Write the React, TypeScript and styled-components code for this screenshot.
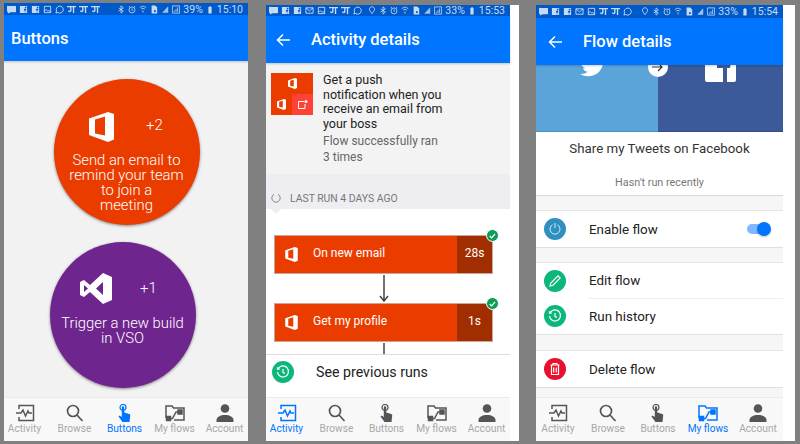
import React from 'react';
import styled, { createGlobalStyle } from 'styled-components';

const Global = createGlobalStyle`
  html, body { margin: 0; padding: 0; background: #808080; }
  body { font-family: Roboto, "Liberation Sans", sans-serif; }
`;

const Page = styled.div`
  width: 800px;
  height: 444px;
  display: flex;
  align-items: flex-start;
  overflow: hidden;
  background: #808080;
`;

const Phone = styled.section<{ $left: number; $top: number; $width: number; $strip?: number }>`
  margin-left: ${p => p.$left}px;
  margin-top: ${p => p.$top}px;
  width: ${p => p.$width}px;
  height: ${p => 441 - p.$top}px;
  padding-right: ${p => p.$strip || 0}px;
  background: #fff;
  display: flex;
  flex-direction: column;
  flex: none;
  overflow: hidden;
`;

const StatusBar = styled.div<{ $h: number }>`
  height: ${p => p.$h}px;
  flex: none;
  background: #0059c9;
  color: rgba(255, 255, 255, 0.78);
  font-size: 10.5px;
  display: flex;
  align-items: center;
  justify-content: space-between;
  padding: 0 5px 0 3px;
`;

const StatusGroup = styled.div`
  display: flex;
  align-items: center;
  gap: 3px;
`;

const AppBar = styled.header<{ $h?: number; $pad?: number }>`
  height: ${p => p.$h || 47}px;
  flex: none;
  background: #0075ff;
  color: #fff;
  display: flex;
  align-items: center;
  font-size: 16.5px;
  font-weight: 500;
  padding-left: ${p => p.$pad || 7}px;
  gap: 21px;
  box-shadow: 0 1px 2px rgba(0, 0, 0, 0.2);
  position: relative;
  z-index: 2;
`;

const Body = styled.main<{ $bg?: string }>`
  flex: 1;
  min-height: 0;
  overflow: hidden;
  background: ${p => p.$bg || '#fff'};
  display: flex;
  flex-direction: column;
`;

const TabBar = styled.nav`
  height: 44px;
  flex: none;
  background: #f8f8f8;
  border-top: 1px solid #ebebeb;
  display: grid;
  grid-template-columns: repeat(5, 50px);
  justify-content: center;
  padding-right: 3px;
  box-sizing: border-box;
`;

const Tab = styled.div<{ $active?: boolean }>`
  display: flex;
  flex-direction: column;
  align-items: center;
  padding-top: 6px;
  gap: 1px;
  font-size: 10.2px;
  line-height: 12px;
  white-space: nowrap;
  color: ${p => (p.$active ? '#0075ff' : '#a8a8a8')};
  svg { color: ${p => (p.$active ? '#0075ff' : '#555')}; }
`;

/* buttons screen */
const CircleList = styled.div`
  display: flex;
  flex-direction: column;
  align-items: center;
  padding: 18px 3px 0 0;
  gap: 17px;
`;

const Circle = styled.div<{ $bg: string; $shift: number; $pad: number }>`
  width: 146px;
  height: 146px;
  border-radius: 50%;
  flex: none;
  background: ${p => p.$bg};
  color: #fff;
  box-shadow: 0 1px 3px rgba(0, 0, 0, 0.45);
  transform: translateX(${p => p.$shift}px);
  display: flex;
  flex-direction: column;
  align-items: center;
  padding-top: ${p => p.$pad}px;
  box-sizing: border-box;
`;

const CircleTop = styled.div<{ $gap: number; $indent: number }>`
  height: 32px;
  display: flex;
  align-items: center;
  gap: ${p => p.$gap}px;
  margin-left: ${p => p.$indent}px;
  font-size: 15px;
  font-weight: 300;
`;

const CircleCount = styled.span<{ $lift: number }>`
  margin-bottom: ${p => p.$lift}px;
`;

const CircleText = styled.div<{ $gap: number }>`
  margin-top: ${p => p.$gap}px;
  width: 130px;
  text-align: center;
  font-size: 14.8px;
  font-weight: 300;
  line-height: 15px;
`;

/* activity screen */
const Summary = styled.div`
  background: #f3f3f3;
  height: 111px;
  flex: none;
  box-sizing: border-box;
  padding: 10px 0 0 5px;
  display: flex;
  gap: 10px;
`;

const Tile = styled.div`
  width: 42px;
  height: 42px;
  flex: none;
  background: #eb3c00;
  display: grid;
  grid-template-columns: 1fr 1fr;
  grid-template-rows: 1fr 1fr;
  place-items: center;
  svg { color: #fff; }
`;

const TileTop = styled.div`
  grid-column: 1 / -1;
  display: flex;
`;

const TileAccent = styled.div`
  width: 100%;
  height: 100%;
  background: #ff4136;
  display: flex;
  align-items: center;
  justify-content: center;
`;

const SummaryTitle = styled.div`
  width: 125px;
  font-size: 12.5px;
  line-height: 14.6px;
  color: #222;
`;

const SummaryNote = styled.div`
  margin-top: 2px;
  font-size: 12px;
  line-height: 16px;
  color: #666;
  width: 120px;
`;

const LastRun = styled.div`
  height: 35px;
  flex: none;
  box-sizing: border-box;
  background: #eeeef2;
  display: flex;
  align-items: center;
  padding: 13px 0 0 5px;
  gap: 9px;
  font-size: 10.4px;
  color: #777;
  position: relative;
  &::after {
    content: '';
    position: absolute;
    left: 5px;
    bottom: -5px;
    border-left: 5px solid transparent;
    border-right: 5px solid transparent;
    border-top: 5px solid #eeeef2;
  }
`;

const Flow = styled.div`
  flex: 1;
  min-height: 0;
  overflow: hidden;
  padding: 26px 0 0 8px;
  display: flex;
  flex-direction: column;
  align-items: flex-start;
`;

const Step = styled.div`
  width: 219px;
  height: 39px;
  flex: none;
  box-sizing: border-box;
  background: #eb3c00;
  border: 1px solid #c9a89c;
  color: #fff;
  display: flex;
  align-items: center;
  font-size: 12px;
  position: relative;
  padding-left: 10px;
  gap: 15px;
`;

const StepName = styled.span`
  flex: 1;
  margin-bottom: 3px;
`;

const StepTime = styled.span`
  width: 35px;
  height: 100%;
  box-sizing: border-box;
  padding-bottom: 4px;
  background: #a12e00;
  display: flex;
  align-items: center;
  justify-content: center;
`;

const Check = styled.span`
  position: absolute;
  right: -7px;
  top: -7px;
  width: 11px;
  height: 11px;
  border-radius: 50%;
  background: #0f9d58;
  border: 1px solid #fff;
  display: flex;
  align-items: center;
  justify-content: center;
`;

const Connector = styled.svg`
  display: block;
  margin-left: 105px;
  flex: none;
`;

const SeeRuns = styled.div`
  height: 43px;
  flex: none;
  box-sizing: border-box;
  background: #fff;
  border-top: 1px solid #ddd;
  display: flex;
  align-items: center;
  padding: 0 0 8px 6px;
  gap: 22px;
  font-size: 14.2px;
  color: #222;
`;

const RoundIcon = styled.span<{ $bg: string }>`
  width: 22px;
  height: 22px;
  border-radius: 50%;
  flex: none;
  background: ${p => p.$bg};
  color: #fff;
  display: flex;
  align-items: center;
  justify-content: center;
`;

/* flow details screen */
const Hero = styled.div`
  height: 67px;
  flex: none;
  display: grid;
  grid-template-columns: 122px 1fr;
  grid-template-rows: 67px;
  overflow: hidden;
  position: relative;
`;

const HeroSide = styled.div<{ $bg: string; $bottom: number; $back: number }>`
  box-sizing: border-box;
  background: ${p => p.$bg};
  border-bottom: 1px solid rgba(0, 0, 0, 0.12);
  display: flex;
  justify-content: center;
  align-items: flex-end;
  padding-bottom: ${p => p.$bottom}px;
  padding-right: ${p => p.$back}px;
  color: #fff;
`;

const HeroArrow = styled.span`
  position: absolute;
  left: 112px;
  top: -8px;
  width: 20px;
  height: 20px;
  border-radius: 50%;
  background: #fff;
  display: flex;
  align-items: center;
  justify-content: center;
`;

const FlowName = styled.div`
  height: 64px;
  flex: none;
  box-sizing: border-box;
  background: #fff;
  border-bottom: 1px solid #d9d9d9;
  display: flex;
  flex-direction: column;
  align-items: center;
`;

const FlowTitle = styled.div`
  margin-top: 8px;
  font-size: 13.3px;
  line-height: 17px;
  color: #333;
`;

const FlowStatus = styled.div`
  margin-top: 19px;
  font-size: 10.8px;
  line-height: 13px;
  color: #777;
`;

const Band = styled.div<{ $h: number }>`
  height: ${p => p.$h}px;
  flex: none;
  background: #f6f6f6;
`;

const Group = styled.div`
  flex: none;
  background: #fff;
  border-top: 1px solid #e6e6e6;
  border-bottom: 1px solid #e0e0e0;
`;

const Row = styled.div`
  height: 35.5px;
  display: flex;
  align-items: center;
  padding: 0 8px;
  gap: 23px;
  font-size: 13.4px;
  color: #222;
`;

const RowLabel = styled.span<{ $rule?: boolean }>`
  flex: 1;
  align-self: stretch;
  display: flex;
  align-items: center;
  padding-top: 1px;
  margin-right: -8px;
  border-bottom: ${p => (p.$rule ? '1px solid #eee' : 'none')};
`;

const Toggle = styled.span`
  width: 21px;
  height: 10px;
  border-radius: 5px;
  background: #80b8ff;
  position: relative;
  margin-right: 7px;
  &::after {
    content: '';
    position: absolute;
    right: -3px;
    top: -2px;
    width: 14px;
    height: 14px;
    border-radius: 50%;
    background: #0075ff;
    box-shadow: 0 1px 2px rgba(0, 0, 0, 0.25);
  }
`;

/* drawings */
const Office = ({ w = 25, h = 30 }: { w?: number; h?: number }) => (
  <svg width={w} height={h} viewBox="0 0 25 30">
    <path fill="currentColor" fillRule="evenodd" d="M0 6.500 19 0l6 2v25.500L19 30 0 23V6.500Zm6 1L16 4.500V23.500L6 21.500V7.500Z" />
  </svg>
);

const VisualStudio = () => (
  <svg width="32" height="31" viewBox="0 0 32 31">
    <path fill="currentColor" fillRule="evenodd" d="M23 0l9 4v23l-9 4-13-12-6 5-4-2V9l4-2 6 5L23 0Zm0 9-7 6.5 7 6.5V9ZM4 12v7l4-3.5L4 12Z" />
  </svg>
);

const Back = () => (
  <svg width="14" height="14" viewBox="0 0 14 14" fill="none" stroke="#fff" strokeWidth="1.5">
    <path d="M14 7H1.500M7 1.500 1.500 7 7 12.500" />
  </svg>
);

const History = () => (
  <svg width="14" height="14" viewBox="0 0 14 14" fill="none" stroke="#fff" strokeWidth="1.2">
    <path d="M2.400 3.400A5.500 5.500 0 1 1 1.500 7M1.500 2.200v2h2.200M7 4v3.400l2 1.200" />
  </svg>
);

const Pencil = () => (
  <svg width="14" height="14" viewBox="0 0 14 14" fill="none" stroke="#fff" strokeWidth="1.1">
    <path d="M2 12l.8-3L10 1.800l2.200 2.200L5 11.200 2 12Z" />
  </svg>
);

const Trash = () => (
  <svg width="14" height="14" viewBox="0 0 14 14" fill="none" stroke="#fff" strokeWidth="1.2">
    <path d="M2.500 3h9M5 3V1.500h4V3M3.500 3v9.500h7V3M5.700 5.500v5M8.300 5.500v5" />
  </svg>
);

const Power = () => (
  <svg width="14" height="14" viewBox="0 0 14 14" fill="none" stroke="#d5ecf7" strokeWidth="1">
    <path d="M4.500 2.800a5 5 0 1 0 5 0M7 1v5" />
  </svg>
);

const Twitter = () => (
  <svg width="26" height="22" viewBox="0 0 24 20">
    <path fill="currentColor" d="M24 2.400a10 10 0 0 1-2.800.8A5 5 0 0 0 23.300.500a10 10 0 0 1-3.100 1.200 4.900 4.900 0 0 0-8.400 4.500A14 14 0 0 1 1.700.900a4.900 4.900 0 0 0 1.500 6.600 5 5 0 0 1-2.200-.6c0 2.400 1.700 4.400 3.900 4.900a5 5 0 0 1-2.200.1 4.900 4.900 0 0 0 4.600 3.400A10 10 0 0 1 0 17.300 14 14 0 0 0 7.500 19.500c9.100 0 14.300-7.700 14-14.600A10 10 0 0 0 24 2.400Z" />
  </svg>
);

const Facebook = () => (
  <svg width="31" height="31" viewBox="0 0 31 31">
    <path fill="currentColor" fillRule="evenodd" d="M2 0h27a2 2 0 0 1 2 2v27a2 2 0 0 1-2 2H2a2 2 0 0 1-2-2V2a2 2 0 0 1 2-2Zm16 31V17h-6v-3h6v-4c0-3 2-5 5-5h3v3h-2c-1.500 0-2 .5-2 2v4h3.500l-.5 3H22v14h-4Z" />
  </svg>
);

const ActivityIcon = () => (
  <svg width="20" height="18" viewBox="0 0 20 18" fill="none" stroke="currentColor" strokeWidth="1.5">
    <path d="M4 5V1.500h14.500v15H4V13M1 9h5l2-3 2.500 6 2.500-5 1 2h3" />
  </svg>
);

const BrowseIcon = () => (
  <svg width="20" height="18" viewBox="0 0 20 18" fill="none" stroke="currentColor" strokeWidth="1.700">
    <circle cx="8" cy="7" r="5.500" />
    <path d="M12 11l5.500 6" />
  </svg>
);

const ButtonsIcon = () => (
  <svg width="20" height="18" viewBox="0 0 20 18" fill="none">
    <circle cx="8" cy="3.500" r="3" stroke="currentColor" strokeWidth="1.200" />
    <path fill="currentColor" d="M6.800 3.500a1.200 1.200 0 0 1 2.400 0v5l5 1.500c.8.300 1.200 1 1 1.800L14.500 18H7.500L3.500 12.500l1-1 2.300 1.500V3.500Z" />
  </svg>
);

const FlowsIcon = () => (
  <svg width="20" height="18" viewBox="0 0 20 18" fill="none" stroke="currentColor" strokeWidth="1.500">
    <path d="M1 14V2h6l1.500 2H19v12H9" />
    <path d="M5 14.500h2.500L11 8h3" />
    <rect x="1.500" y="12.500" width="4" height="4" fill="currentColor" />
    <rect x="13" y="6" width="4" height="4" fill="currentColor" />
  </svg>
);

const AccountIcon = () => (
  <svg width="20" height="18" viewBox="0 0 20 18">
    <circle cx="10" cy="4.500" r="4.300" fill="currentColor" />
    <path fill="currentColor" d="M1.500 18v-2c0-3 4-5 8.500-5s8.500 2 8.500 5v2h-17Z" />
  </svg>
);

const tabs = [
  { name: 'Activity', icon: <ActivityIcon /> },
  { name: 'Browse', icon: <BrowseIcon /> },
  { name: 'Buttons', icon: <ButtonsIcon /> },
  { name: 'My flows', icon: <FlowsIcon /> },
  { name: 'Account', icon: <AccountIcon /> },
];

const Tabs = ({ active }: { active: string }) => (
  <TabBar>
    {tabs.map(t => (
      <Tab key={t.name} $active={t.name === active}>
        {t.icon}
        <span>{t.name}</span>
      </Tab>
    ))}
  </TabBar>
);

const glyphs: Record<string, React.ReactNode> = {
  msg: <path fill="currentColor" d="M2 1h7a2 2 0 0 1 0 7H4L1 9.500V7.500A3 3 0 0 1 2 1Z" />,
  fb: <path fill="currentColor" d="M1 1h8v8H7V6h1V4.500H7V3.500h1.200V2H6.500v2.500h-1V6h1v3H1V1Z" />,
  mail: <path fill="none" stroke="currentColor" d="M1 2h8v6H1V2Zm0 0 4 3.500L9 2" />,
  img: <path fill="none" stroke="currentColor" d="M1.500 1.500h7v7h-7v-7ZM1.500 7l2-2 2 2 1-1 2 2" />,
  wa: <path fill="none" stroke="currentColor" d="M1 9l.7-2.300A3.900 3.900 0 1 1 3 8.300L1 9Z" />,
  hi: <path fill="currentColor" d="M0 1h10v1.500H8V9H6.500V2.500H5V6a2 2 0 0 1-4 0h1.200a.8.800 0 0 0 1.300 0V2.500H0V1Z" />,
  pin: <path fill="none" stroke="currentColor" d="M5 9 2.300 5.200a3.200 3.200 0 1 1 5.400 0L5 9Z" />,
  bt: <path fill="none" stroke="currentColor" d="M2 3l6 4-3 2.500v-9L8 3 2 7" />,
  alarm: <path fill="none" stroke="currentColor" d="M5 1.800a3.700 3.700 0 1 1 0 7.400 3.700 3.700 0 0 1 0-7.400ZM5 3.500v2l1.300.8M1 2l1.500-1M9 2 7.500 1" />,
  wifi: <path fill="none" stroke="currentColor" d="M1 2.500a6 6 0 0 1 8 0M2.700 4.500a3.500 3.500 0 0 1 4.600 0M5 6v3" />,
  call: <path fill="currentColor" d="M2 0h4.500L9 2.500V10H2V0Zm3 7a1.200 1.200 0 1 0 0-.1Z" />,
  sig: <path fill="currentColor" d="M9 1v8H1.500L9 1Z" opacity="0.8" />,
  sigbox: <path fill="none" stroke="currentColor" d="M.5.500h9v9h-9v-9ZM3 8V6.500M5 8V4.500M7 8V2.500" />,
  batt: <path fill="currentColor" d="M3 2h1V1h2v1h1v8H3V2Z" />,
};

const Status = ({ h, left, right, pct, time }: { h: number; left: string[]; right: string[]; pct: string; time: string }) => (
  <StatusBar $h={h}>
    <StatusGroup>
      {left.map((g, i) => (
        <svg key={i} width="9" height="9" viewBox="0 0 10 10">{glyphs[g]}</svg>
      ))}
    </StatusGroup>
    <StatusGroup>
      {right.map((g, i) => (
        <svg key={i} width="8" height="9" viewBox="0 0 10 10">{glyphs[g]}</svg>
      ))}
      <span>{pct}</span>
      <svg width="8" height="9" viewBox="0 0 10 10">{glyphs.batt}</svg>
      <span>{time}</span>
    </StatusGroup>
  </StatusBar>
);

const StepBox = ({ name, time }: { name: string; time: string }) => (
  <Step>
    <Office w={13} h={15} />
    <StepName>{name}</StepName>
    <StepTime>{time}</StepTime>
    <Check>
      <svg width="7" height="6" viewBox="0 0 7 6" fill="none" stroke="#fff" strokeWidth="1.200">
        <path d="M.8 3l1.800 1.800L6 1" />
      </svg>
    </Check>
  </Step>
);

export default function App() {
  return (
    <Page>
      <Global />

      <Phone $left={4} $top={3} $width={244}>
        <Status
          h={12}
          left={['msg', 'fb', 'fb', 'img', 'wa', 'hi', 'hi', 'hi']}
          right={['bt', 'alarm', 'wifi', 'call', 'sig', 'sigbox']}
          pct="39%"
          time="15:10"
        />
        <AppBar $h={46}>Buttons</AppBar>
        <Body $bg="#f2f2f2">
          <CircleList>
            <Circle $bg="#eb3c00" $shift={2} $pad={32}>
              <CircleTop $gap={32} $indent={-1}>
                <Office />
                <CircleCount $lift={4}>+2</CircleCount>
              </CircleTop>
              <CircleText $gap={10}>
                Send an email to
                <br />
                remind your team
                <br />
                to join a
                <br />
                meeting
              </CircleText>
            </Circle>
            <Circle $bg="#6f258e" $shift={-2} $pad={30}>
              <CircleTop $gap={28} $indent={-8}>
                <VisualStudio />
                <CircleCount $lift={0}>+1</CircleCount>
              </CircleTop>
              <CircleText $gap={12}>Trigger a new build in VSO</CircleText>
            </Circle>
          </CircleList>
        </Body>
        <Tabs active="Buttons" />
      </Phone>

      <Phone $left={18} $top={5} $width={244} $strip={9}>
        <Status
          h={11}
          left={['msg', 'fb', 'fb', 'mail', 'img', 'hi', 'hi', 'wa']}
          right={['pin', 'bt', 'alarm', 'wifi', 'call', 'sig', 'sigbox']}
          pct="33%"
          time="15:53"
        />
        <AppBar $pad={10}>
          <Back />
          Activity details
        </AppBar>
        <Body>
          <Summary>
            <Tile>
              <TileTop><Office w={9} h={11} /></TileTop>
              <Office w={9} h={11} />
              <TileAccent>
                <svg width="11" height="11" viewBox="0 0 11 11" fill="none" stroke="#fff">
                  <path d="M7 2.500H1.500v7h6.500V5" />
                  <circle cx="9" cy="2.500" r="1.500" fill="#fff" stroke="none" />
                </svg>
              </TileAccent>
            </Tile>
            <div>
              <SummaryTitle>Get a push notification when you receive an email from your boss</SummaryTitle>
              <SummaryNote>Flow successfully ran 3 times</SummaryNote>
            </div>
          </Summary>
          <LastRun>
            <svg width="10" height="10" viewBox="0 0 10 10" fill="none" stroke="#888">
              <path d="M3 1.300A4.200 4.200 0 1 0 7 1.300" />
            </svg>
            <span>LAST RUN 4 DAYS AGO</span>
          </LastRun>
          <Flow>
            <StepBox name="On new email" time="28s" />
            <Connector width="10" height="29" viewBox="0 0 10 29" fill="none" stroke="#444" strokeWidth="1.500">
              <path d="M5 1v25M1 22l4 5 4-5" />
            </Connector>
            <StepBox name="Get my profile" time="1s" />
            <Connector width="10" height="20" viewBox="0 0 10 20" fill="none" stroke="#444" strokeWidth="1.500">
              <path d="M5 1v19" />
            </Connector>
          </Flow>
          <SeeRuns>
            <RoundIcon $bg="#0db77c"><History /></RoundIcon>
            See previous runs
          </SeeRuns>
        </Body>
        <Tabs active="Activity" />
      </Phone>

      <Phone $left={17} $top={5} $width={247} $strip={12}>
        <Status
          h={13}
          left={['msg', 'fb', 'fb', 'mail', 'img', 'hi', 'hi', 'wa']}
          right={['pin', 'bt', 'alarm', 'wifi', 'call', 'sig', 'sigbox']}
          pct="33%"
          time="15:54"
        />
        <AppBar $pad={12}>
          <Back />
          Flow details
        </AppBar>
        <Body>
          <Hero>
            <HeroSide $bg="#5ba4da" $bottom={54} $back={8}><Twitter /></HeroSide>
            <HeroSide $bg="#3c5a99" $bottom={49} $back={0}><Facebook /></HeroSide>
            <HeroArrow>
              <svg width="12" height="10" viewBox="0 0 12 10" fill="none" stroke="#333" strokeWidth="1.200">
                <path d="M0 5h10M6 1l4 4-4 4" />
              </svg>
            </HeroArrow>
          </Hero>
          <FlowName>
            <FlowTitle>Share my Tweets on Facebook</FlowTitle>
            <FlowStatus>Hasn't run recently</FlowStatus>
          </FlowName>
          <Band $h={14} />
          <Group>
            <Row>
              <RoundIcon $bg="#2f8fc0"><Power /></RoundIcon>
              <RowLabel>Enable flow</RowLabel>
              <Toggle />
            </Row>
          </Group>
          <Band $h={14.5} />
          <Group>
            <Row>
              <RoundIcon $bg="#0db77c"><Pencil /></RoundIcon>
              <RowLabel $rule>Edit flow</RowLabel>
            </Row>
            <Row>
              <RoundIcon $bg="#0db77c"><History /></RoundIcon>
              <RowLabel>Run history</RowLabel>
            </Row>
          </Group>
          <Band $h={15} />
          <Group>
            <Row>
              <RoundIcon $bg="#e8112d"><Trash /></RoundIcon>
              <RowLabel>Delete flow</RowLabel>
            </Row>
          </Group>
          <Band $h={12} />
        </Body>
        <Tabs active="My flows" />
      </Phone>
    </Page>
  );
}
